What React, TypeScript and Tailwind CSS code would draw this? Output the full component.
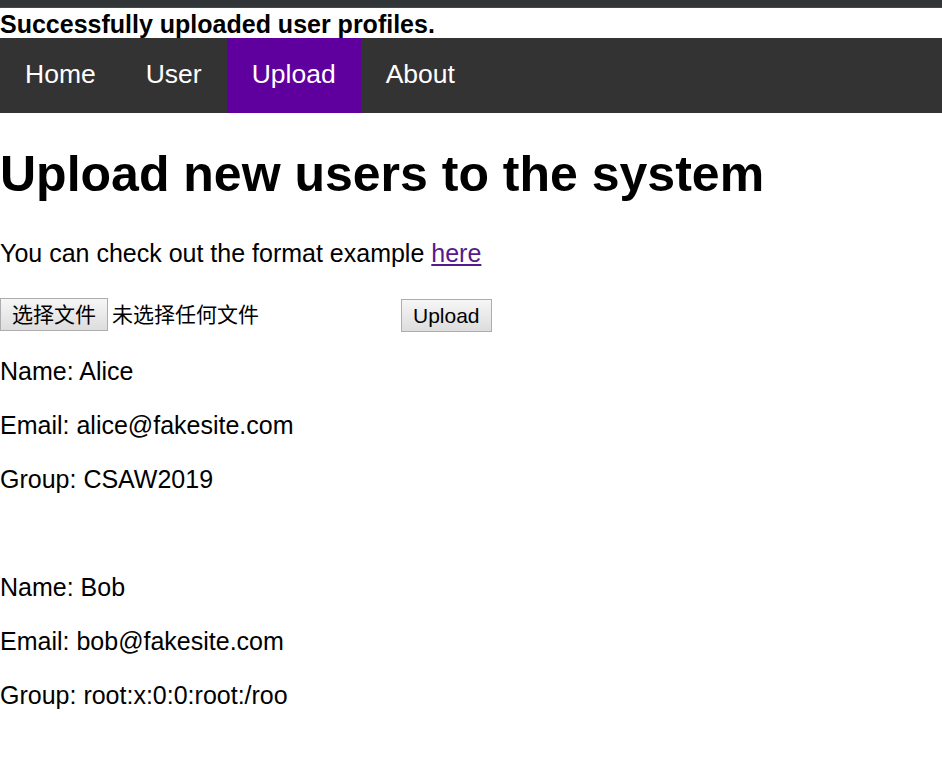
const NAV = ["Home", "User", "Upload", "About"];

const USERS = [
  { name: "Alice", email: "alice@fakesite.com", group: "CSAW2019" },
  { name: "Bob", email: "bob@fakesite.com", group: "root:x:0:0:root:/roo" },
];

const FONT = "font-['Liberation_Sans','Noto_Sans_CJK_SC',sans-serif]";

function Field(props: { label: string; value: string }) {
  return (
    <p className="mt-[25px] text-[25px] leading-[28.75px] text-black">
      {props.label}: {props.value}
    </p>
  );
}

export default function App() {
  return (
    <div className={`${FONT} min-h-[777px] w-[942px] bg-white text-black`}>
      <div className="h-[8px] border-b border-[#45474a] bg-[#323538]" />
      <div className="h-[30px] pt-[1px] text-[25px] font-bold leading-[30px]">Successfully uploaded user profiles.</div>

      <nav className="flex h-[75px] bg-[#333333]">
        {NAV.map((item) => (
          <a
            key={item}
            className={`flex items-center px-[25px] pb-[2px] text-[26.5px] text-white ${
              item === "Upload" ? "bg-[#5f009e]" : ""
            }`}
          >
            {item}
          </a>
        ))}
      </nav>

      <h1 className="mt-[32px] text-[50px] font-bold leading-[58px]">Upload new users to the system</h1>
      <p className="mt-[36px] text-[25px] leading-[29px]">
        You can check out the format example{" "}
        <a className="text-[#551a8b] underline">here</a>
      </p>

      <form className="mt-[30px] flex items-start">
        <div className="flex w-[401px] items-center">
          <span className="h-[33px] border border-[#adadad] bg-gradient-to-b from-[#f6f6f6] to-[#dddddd] px-[11px] text-[21px] leading-[31px]">
            选择文件
          </span>
          <span className="ml-[4px] text-[21px] leading-[31px]">未选择任何文件</span>
        </div>
        <button
          type="button"
          className="mt-[1px] h-[33px] border border-[#adadad] bg-gradient-to-b from-[#f6f6f6] to-[#dddddd] px-[11px] text-[21px] leading-[31px]"
        >
          Upload
        </button>
      </form>

      {USERS.map((u, i) => (
        <div key={u.name} className={i > 0 ? "pt-[54.75px]" : ""}>
          <Field label="Name" value={u.name} />
          <Field label="Email" value={u.email} />
          <Field label="Group" value={u.group} />
        </div>
      ))}
    </div>
  );
}
